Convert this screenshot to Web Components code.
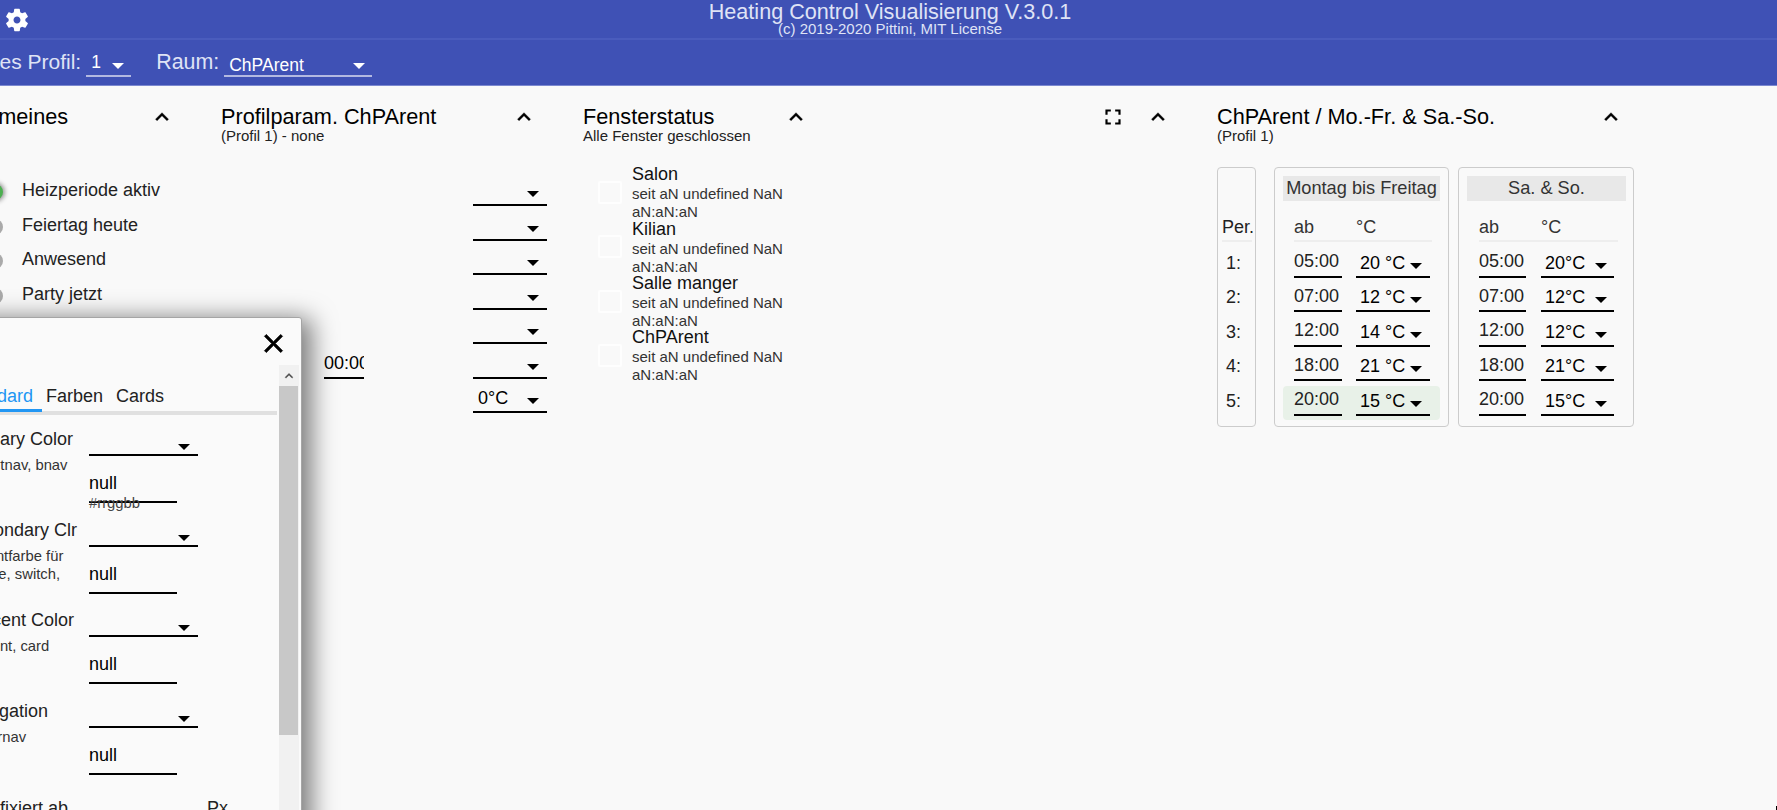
<!DOCTYPE html>
<html lang="de"><head><meta charset="utf-8"><title>Heating Control</title>
<style>
html,body{margin:0;padding:0;height:810px;overflow:hidden;background:#f9f9f9;color:#000;font-family:"Liberation Sans",Arial,sans-serif}
body{position:relative}
</style></head><body>
<hc-header></hc-header>
<hc-main>
  <hc-card heading="Allgemeines" style="--w:271px;--top:30.5px">
    <hc-status on>Heizperiode aktiv</hc-status>
    <hc-status>Feiertag heute</hc-status>
    <hc-status>Anwesend</hc-status>
    <hc-status>Party jetzt</hc-status>
  </hc-card>
  <hc-card heading="Profilparam. ChPArent" sub="(Profil 1) - none" style="--w:362px;--top:28.5px">
    <hc-param></hc-param><hc-param></hc-param><hc-param></hc-param><hc-param></hc-param><hc-param></hc-param>
    <hc-param time="00:00"></hc-param>
    <hc-param value="0°C"></hc-param>
  </hc-card>
  <hc-card heading="Fensterstatus" sub="Alle Fenster geschlossen" style="--w:272px;--top:22px">
    <hc-window name="Salon"></hc-window>
    <hc-window name="Kilian"></hc-window>
    <hc-window name="Salle manger"></hc-window>
    <hc-window name="ChPArent"></hc-window>
  </hc-card>
  <hc-card heading="" expand style="--w:362px;--top:0px"></hc-card>
  <hc-card heading="ChPArent / Mo.-Fr. &amp; Sa.-So." sub="(Profil 1)" style="--w:453px;--top:24px">
    <hc-schedule></hc-schedule>
  </hc-card>
</hc-main>
<hc-dialog></hc-dialog>
<hc-corner></hc-corner>
<script>
class Base extends HTMLElement{
  connectedCallback(){
    if(this.shadowRoot)return;
    const r=this.attachShadow({mode:'open'});
    r.innerHTML='<style>'+this.constructor.css+'</style>'+this.render();
  }
  a(n,d=''){return this.hasAttribute(n)?this.getAttribute(n):d}
  render(){return '<slot></slot>'}
}
const ICON={
 cog:'<path d="M19.14 12.94c.04-.3.06-.61.06-.94 0-.32-.02-.64-.07-.94l2.03-1.58c.18-.14.23-.41.12-.61l-1.92-3.32c-.12-.22-.37-.29-.59-.22l-2.39.96c-.5-.38-1.03-.7-1.62-.94l-.36-2.54c-.04-.24-.24-.41-.48-.41h-3.84c-.24 0-.43.17-.47.41l-.36 2.54c-.59.24-1.13.57-1.62.94l-2.39-.96c-.22-.08-.47 0-.59.22L2.74 8.87c-.12.21-.08.47.12.61l2.03 1.58c-.05.3-.09.63-.09.94s.02.64.07.94l-2.03 1.58c-.18.14-.23.41-.12.61l1.92 3.32c.12.22.37.29.59.22l2.39-.96c.5.38 1.03.7 1.62.94l.36 2.54c.05.24.24.41.48.41h3.84c.24 0 .44-.17.47-.41l.36-2.54c.59-.24 1.13-.56 1.62-.94l2.39.96c.22.08.47 0 .59-.22l1.92-3.32c.12-.22.07-.47-.12-.61l-2.01-1.58zM12 15c-1.66 0-3-1.34-3-3s1.34-3 3-3 3 1.34 3 3-1.34 3-3 3z"/>',
 less:'<path stroke="currentColor" stroke-width=".35" d="M12 8l-6 6 1.41 1.41L12 10.83l4.59 4.58L18 14z"/>',
 full:'<path d="M7 14H5v5h5v-2H7v-3zm-2-4h2V7h3V5H5v5zm12 7h-3v2h5v-5h-2v3zM14 5v2h3v3h2V5h-5z"/>',
 close:'<path stroke="currentColor" stroke-width=".6" d="M19 6.41L17.59 5 12 10.59 6.41 5 5 6.41 10.59 12 5 17.59 6.41 19 12 13.41 17.59 19 19 17.59 13.41 12z"/>'
};
const svg=(n,s,c='currentColor')=>`<svg width="${s}" height="${s}" viewBox="0 0 24 24" fill="${c}" style="display:block;flex:none">${ICON[n]}</svg>`;

class HcSelect extends Base{
  static css=`:host{display:flex;align-items:flex-end;box-sizing:border-box;height:var(--h,30px);border-bottom:2px solid var(--line,#000);font-size:var(--fs,18px);color:var(--fg,#000)}
  .v{line-height:22px;padding-left:var(--pl,5px);margin-bottom:var(--val-mb,2px);white-space:nowrap}
  .a{margin-left:auto;margin-right:var(--ar,8px);margin-bottom:var(--arrow-mb,7px);width:0;height:0;border-left:6px solid transparent;border-right:6px solid transparent;border-top:6px solid var(--fg,#000);flex:none}`;
  render(){return `<span class="v">${this.a('value')}</span><span class="a"></span>`}
}
customElements.define('hc-select',HcSelect);

class HcTime extends Base{
  static css=`:host{display:flex;align-items:flex-end;box-sizing:border-box;height:30px;border-bottom:2px solid #000;overflow:hidden;font-size:18px}
  span{line-height:22px;margin-bottom:var(--time-mb,3.5px);white-space:nowrap}`;
  render(){return `<span>${this.a('value')}</span>`}
}
customElements.define('hc-time',HcTime);

class HcHeader extends Base{
  static css=`:host{display:block;background:#3f51b5;height:86px;box-sizing:border-box;border-bottom:1px solid #7c89d0;color:#dfe3f5}
  .top{height:38px;border-bottom:2px solid #4a5cbd;display:flex;align-items:center;position:relative;padding-left:3px;box-sizing:content-box}
  .gear{color:#fff;margin-top:1px}
  .t{position:absolute;left:3px;right:0;top:2px;text-align:center;pointer-events:none}
  .t b{display:block;font-weight:400;font-size:21.6px;line-height:20px}
  .t i{display:block;font-style:normal;font-size:15px;line-height:14px}
  .nav{display:flex;height:45px;align-items:flex-end;margin-left:-46px;font-size:21px;--line:#b3b9e1;--fg:#fff}
  .l{line-height:26px;margin-bottom:10px;white-space:nowrap}
  .r{font-size:21.4px}
  hc-select{margin-bottom:8px;--h:30px;--fs:17.5px;--arrow-mb:6px;--ar:7.5px}
  .one{width:45px;margin:0 25px 8px 5px;--val-mb:2px}
  .room{width:148px;margin-left:5px;--val-mb:-1px}`;
  render(){return `<div class="top"><span class="gear">${svg('cog',28)}</span><div class="t"><b>Heating Control Visualisierung V.3.0.1</b><i>(c) 2019-2020 Pittini, MIT License</i></div></div>
  <div class="nav"><span class="l">Aktives Profil:</span><hc-select class="one" value="1"></hc-select><span class="l r">Raum:</span><hc-select class="room" value="ChPArent"></hc-select></div>`}
}
customElements.define('hc-header',HcHeader);

class HcMain extends Base{
  static css=`:host{display:flex;align-items:flex-start;margin-left:-50px;width:2000px}`;
}
customElements.define('hc-main',HcMain);

class HcCard extends Base{
  static css=`:host{display:block;flex:none;width:var(--w)}
  .head{display:flex;align-items:flex-start;box-sizing:border-box;height:57px;padding:18px 46px 0 0}
  .tt{white-space:nowrap;padding-top:1px}
  h2{margin:0;font-weight:400;font-size:21.7px;line-height:24px}
  p{margin:0;font-size:15px;line-height:14px;color:#222}
  .ic{margin-left:auto;display:flex;align-items:center;gap:19px}
  .body{padding-top:var(--top,0)}`;
  render(){
    const sub=this.a('sub');
    return `<div class="head"><div class="tt"><h2>${this.a('heading').replace('&','&amp;')}</h2>${sub?`<p>${sub}</p>`:''}</div>
    <div class="ic">${this.hasAttribute('expand')?svg('full',26):''}${svg('less',26)}</div></div><div class="body"><slot></slot></div>`}
}
customElements.define('hc-card',HcCard);

class HcStatus extends Base{
  static css=`:host{display:flex;align-items:center;height:34.5px;padding-left:37px;font-size:18px;color:#222}
  .d{width:16px;height:16px;border-radius:50%;background:#aaa;margin-right:19px;margin-top:3px;flex:none}
  :host([on]) .d{background:#4caf50;box-shadow:0 0 4px 2px #999}`;
  render(){return `<span class="d"></span><slot></slot>`}
}
customElements.define('hc-status',HcStatus);

class HcParam extends Base{
  static css=`:host{display:grid;grid-template-columns:103px 40px 109px 74px;height:34.5px;align-items:end;--time-mb:3px}`;
  render(){
    const t=this.a('time');
    return `<span></span>${t?`<hc-time value="${t}"></hc-time>`:'<span></span>'}<span></span><hc-select value="${this.a('value')}"></hc-select>`}
}
customElements.define('hc-param',HcParam);

class HcWindow extends Base{
  static css=`:host{display:flex;height:54.33px;padding-left:14.5px;color:#333}
  .c{box-sizing:border-box;width:24px;height:23px;margin-top:16px;border:2px solid #fefefe;border-radius:2px;background:#f9f9f9;flex:none}
  .x{margin-left:10.5px;width:160px;font-size:15px;line-height:18px;padding-top:.4px}
  .n{font-size:18px;line-height:18px;margin-bottom:2px;color:#111;white-space:nowrap}`;
  render(){return `<span class="c"></span><div class="x"><div class="n">${this.a('name')}</div>seit aN undefined NaN aN:aN:aN</div>`}
}
customElements.define('hc-window',HcWindow);

class HcDayBox extends Base{
  static css=`:host{display:block;box-sizing:border-box;width:var(--bw);height:260px;border:1px solid #ccc;border-radius:4px;padding:8px var(--pr,8px) 8px 8px;font-size:18px;flex:none;color:#222}
  .h{height:25px;line-height:25px;background:#e8e8e8;text-align:center;color:#333;white-space:nowrap;font-size:18.2px}
  .c,.r{display:grid;grid-template-columns:var(--c1) var(--c2);column-gap:var(--g)}
  .c{margin:13px 8px 5.5px var(--pl);height:26px;line-height:26px;border-bottom:2px solid #eee;color:#333}
  .r{height:34.5px;box-sizing:border-box;padding:0 0 5px var(--pl);align-items:end;border-radius:4px}
  .r.now{background:#e8f1e8}`;
  render(){
    const unit=this.a('unit');
    const rows=this.a('rows').split(',').map((s,i)=>{const[t,v]=s.split('=');
      const now=this.a('now')===String(i);
      return `<div class="r${now?' now':''}"><hc-time value="${t}"></hc-time><hc-select style="--pl:4px;--ar:${this.a('ar')}" value="${v}${unit}"></hc-select></div>`}).join('');
    return `<div class="h">${this.a('title')}</div><div class="c"><span>ab</span><span>°C</span></div>${rows}`}
}
customElements.define('hc-daybox',HcDayBox);

class HcSchedule extends Base{
  static css=`:host{display:flex}
  .per{box-sizing:border-box;width:39px;height:260px;border:1px solid #ccc;border-radius:4px;margin-right:18px;font-size:18px;color:#222;flex:none;padding-top:46px}
  .ph{margin:0 3px 5.5px 4px;height:26px;line-height:26px;margin-left:4px;border-bottom:2px solid #eee;white-space:nowrap}
  .n{height:34.5px;line-height:30px;padding-left:8px;box-sizing:border-box}
  .wd{margin-right:9px;--bw:175px;--c1:48px;--c2:74px;--g:14px;--pl:11px}
  .we{--bw:176px;--c1:47px;--c2:73px;--g:15px;--pl:12px;--pr:7px}`;
  render(){return `<div class="per"><div class="ph">Per.</div><div class="n">1:</div><div class="n">2:</div><div class="n">3:</div><div class="n">4:</div><div class="n">5:</div></div>
  <hc-daybox class="wd" title="Montag bis Freitag" unit=" °C" ar="8px" now="4" rows="05:00=20,07:00=12,12:00=14,18:00=21,20:00=15"></hc-daybox>
  <hc-daybox class="we" title="Sa. &amp; So." unit="°C" ar="7.5px" rows="05:00=20,07:00=12,12:00=12,18:00=21,20:00=15"></hc-daybox>`}
}
customElements.define('hc-schedule',HcSchedule);

class HcField extends Base{
  static css=`:host{display:grid;grid-template-columns:126px 109px;height:90.67px;color:#222;--arrow-mb:4px}
  .l{font-size:18px;line-height:26px;white-space:nowrap}
  .s{font-size:14.8px;line-height:18px;margin-top:4px;white-space:nowrap;color:#333}
  .i{box-sizing:border-box;width:88px;height:47px;padding-top:16px;line-height:22px;font-size:18px;border-bottom:2px solid #000;color:#000}
  .hint{font-size:14.8px;line-height:18px;margin-top:-9px;color:#444}`;
  render(){
    const h=this.a('hint');
    return `<div><div class="l" style="margin-left:${this.a('lm','0')}px">${this.a('label')}</div><div class="s" style="margin-left:${this.a('nm','0')}px">${this.a('note').split('|').join('<br>')}</div></div>
    <div><hc-select></hc-select><div class="i">null</div>${h?`<div class="hint">${h}</div>`:''}</div>`}
}
customElements.define('hc-field',HcField);

class HcDialog extends Base{
  static css=`:host{position:absolute;left:-200px;top:317px;width:502px;height:520px;box-sizing:border-box;background:#fafafa;border:1px solid #a5a5a5;border-radius:3px;box-shadow:5px 6px 24px 5px rgba(0,0,0,.5);z-index:5;font-size:18px;display:flex;flex-direction:column;overflow:hidden}
  .top{height:47px;flex:none;display:flex;justify-content:flex-end;align-items:flex-start;padding:10px 12px 0 0;box-sizing:border-box}
  .body{flex:1;display:flex;padding-right:3px;min-height:0}
  .content{width:476px;margin-right:2px;padding-top:20px;box-sizing:border-box;flex:none}
  .tabs{display:flex;padding-left:150px;border-bottom:4px solid #e0e0e0;color:#222}
  .tab{line-height:22px;padding:0 7px 2px;border-bottom:3px solid transparent;margin-bottom:-1px;position:relative;white-space:nowrap}
  .tab.on{color:#2196f3;border-bottom-color:#2196f3;padding:0 9px 2px}
  .tab.f{padding:0 6px 2px 4px}
  .fields{padding:11px 0 0 162px}
  .fix{display:flex;margin-top:5px;line-height:28px;color:#222;white-space:nowrap}
  .fix span:first-child{width:244px}
  .sb{width:20px;flex:none;background:#f1f1f1;display:flex;flex-direction:column}
  .up{height:21px;display:flex;align-items:center;justify-content:center;flex:none;color:#505050}
  .th{height:349px;width:19px;background:#c8c8c8;flex:none}`;
  render(){return `<div class="top">${svg('close',31)}</div>
  <div class="body"><div class="content">
    <div class="tabs"><span class="tab on">Standard</span><span class="tab f">Farben</span><span class="tab">Cards</span></div>
    <div class="fields">
      <hc-field label="Primary Color" note="Für tnav, bnav" nm="11" hint="#rrggbb"></hc-field>
      <hc-field label="Secondary Clr" note="Akzentfarbe für|Range, switch,"></hc-field>
      <hc-field label="Accent Color" lm="8" note="Accent, card" nm="4"></hc-field>
      <hc-field label="Navigation" note="Für rnav" nm="8"></hc-field>
      <div class="fix"><span>Nav fixiert ab</span><span>Px</span></div>
    </div>
  </div>
  <div class="sb"><div class="up">${svg('less',16)}</div><div class="th"></div></div></div>`}
}
customElements.define('hc-dialog',HcDialog);

class HcCorner extends Base{
  static css=`:host{position:absolute;right:0;top:806px;width:1px;height:4px;background:#000}`;
  render(){return ''}
}
customElements.define('hc-corner',HcCorner);
</script>
</body></html>
